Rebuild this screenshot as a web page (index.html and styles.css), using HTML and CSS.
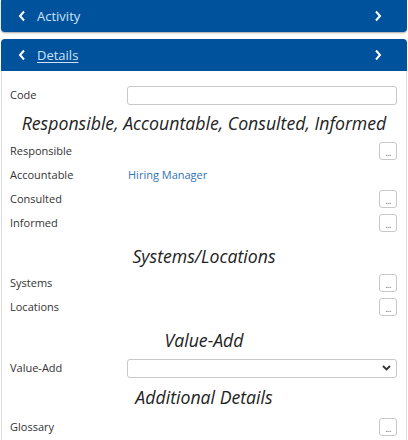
FILE: index.html
```html
<!DOCTYPE html>
<html>
<head>
<meta charset="utf-8">
<link rel="stylesheet" href="styles.css">
</head>
<body>
<div class="page">
  <div class="bar bar-top">
    <svg class="chev" width="8" height="12" viewBox="0 0 8 12"><path d="M6 1.5 L2 6 L6 10.5" fill="none" stroke="#fff" stroke-width="2"/></svg>
    <span class="bar-title">Activity</span>
    <svg class="chev chev-r" width="8" height="12" viewBox="0 0 8 12"><path d="M2 1.5 L6 6 L2 10.5" fill="none" stroke="#fff" stroke-width="2"/></svg>
  </div>
  <div class="bar bar-details">
    <svg class="chev" width="8" height="12" viewBox="0 0 8 12"><path d="M6 1.5 L2 6 L6 10.5" fill="none" stroke="#fff" stroke-width="2"/></svg>
    <a class="bar-title link">Details</a>
    <svg class="chev chev-r" width="8" height="12" viewBox="0 0 8 12"><path d="M2 1.5 L6 6 L2 10.5" fill="none" stroke="#fff" stroke-width="2"/></svg>
  </div>
  <div class="panel">
    <div class="row">
      <span class="label">Code</span>
      <div class="input"></div>
    </div>
    <div class="heading">Responsible, Accountable, Consulted, Informed</div>
    <div class="row"><span class="label">Responsible</span><span class="val"></span><span class="btn">...</span></div>
    <div class="row"><span class="label">Accountable</span><span class="val link-blue">Hiring Manager</span></div>
    <div class="row"><span class="label">Consulted</span><span class="val"></span><span class="btn">...</span></div>
    <div class="row"><span class="label">Informed</span><span class="val"></span><span class="btn">...</span></div>
    <div class="heading gap">Systems/Locations</div>
    <div class="row"><span class="label">Systems</span><span class="val"></span><span class="btn">...</span></div>
    <div class="row"><span class="label">Locations</span><span class="val"></span><span class="btn">...</span></div>
    <div class="heading gap">Value-Add</div>
    <div class="row row-tall">
      <span class="label">Value-Add</span>
      <div class="input select">
        <svg width="9" height="6" viewBox="0 0 9 6"><path d="M1 1 L4.5 4.5 L8 1" fill="none" stroke="#333" stroke-width="1.8"/></svg>
      </div>
    </div>
    <div class="heading">Additional Details</div>
    <div class="row row-last"><span class="label">Glossary</span><span class="val"></span><span class="btn">...</span></div>
  </div>
</div>
</body>
</html>
```

FILE: styles.css
```css
html, body {
  margin: 0;
  padding: 0;
  background: #fff;
}
body {
  font-family: "Open Sans", "Noto Sans", sans-serif;
  color: #333;
}
.page {
  width: 406px;
  padding-left: 1px;
  height: 440px;
  overflow: hidden;
}
.bar {
  background: #00529d;
  height: 32px;
  display: flex;
  align-items: center;
  padding: 0 25px 0 17px;
  box-sizing: border-box;
}
.bar-top {
  border-radius: 0 0 4px 4px;
  box-shadow: 0 1px 2px rgba(0,0,0,0.35);
}
.bar-details {
  margin-top: 7px;
  border-radius: 4px 4px 0 0;
}
.chev {
  display: block;
  flex: none;
}
.chev-r {
  margin-left: auto;
}
.bar-title {
  margin-left: 11px;
  font-size: 13px;
  color: #cfe2f5;
}
.link {
  text-decoration: underline;
  text-underline-offset: 2px;
}
.panel {
  border: 1px solid #dcdcdc;
  border-top: none;
  padding: 12px 8px 4px 8px;
}
.row {
  display: flex;
  align-items: center;
  height: 24px;
  font-size: 11px;
}
.row-tall {
  height: 26px;
}
.row-last {
  margin-top: 2px;
}
.label {
  width: 117px;
  flex: none;
  color: #333;
  position: relative;
  top: -1px;
}
.val {
  flex: 1;
  padding-left: 1px;
  position: relative;
  top: -1px;
}
.link-blue {
  color: #2f74b8;
}
.input {
  flex: 1;
  height: 19px;
  box-sizing: border-box;
  border: 1px solid #c8c8c8;
  border-radius: 3px;
  background: #fff;
  margin-right: 1px;
}
.select {
  display: flex;
  align-items: center;
  justify-content: flex-end;
  padding-right: 5px;
}
.btn {
  width: 18px;
  height: 18px;
  box-sizing: border-box;
  border: 1px solid #c8c8c8;
  border-radius: 3px;
  font-size: 9px;
  color: #666;
  display: flex;
  justify-content: center;
  align-items: flex-end;
  line-height: 12px;
  letter-spacing: -0.5px;
  flex: none;
  margin-right: 1px;
}
.heading {
  height: 32px;
  display: flex;
  align-items: center;
  justify-content: center;
  font-style: italic;
  font-size: 17.7px;
  color: #222;
}
.heading.gap {
  margin-top: 6px;
  height: 30px;
}
```
